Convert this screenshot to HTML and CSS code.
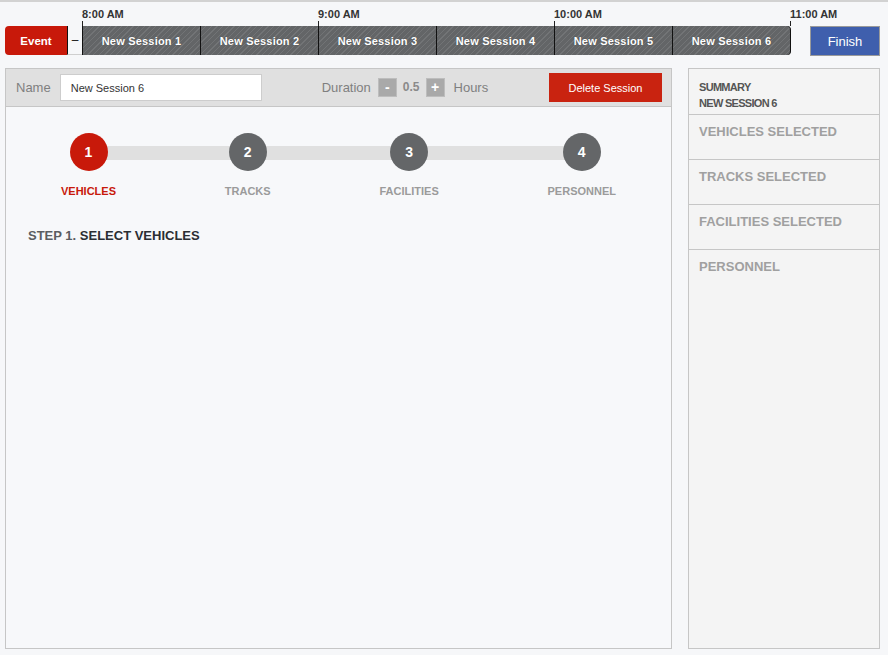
FILE: index.html
```html
<!DOCTYPE html>
<html>
<head>
<meta charset="utf-8">
<link rel="stylesheet" href="styles.css">
</head>
<body>
<div class="topbar">
  <div class="timeline">
    <div class="ruler">
      <div class="hour"><span class="hour-label">8:00 AM</span><span class="tick"></span></div>
      <div class="hour"><span class="hour-label">9:00 AM</span><span class="tick"></span></div>
      <div class="hour"><span class="hour-label">10:00 AM</span><span class="tick"></span></div>
      <div class="hour hour-last"><span class="hour-label">11:00 AM</span><span class="tick"></span></div>
    </div>
    <div class="track">
      <div class="event">Event</div>
      <div class="gap">–</div>
      <div class="session">New Session 1</div>
      <div class="session">New Session 2</div>
      <div class="session">New Session 3</div>
      <div class="session">New Session 4</div>
      <div class="session">New Session 5</div>
      <div class="session session-last">New Session 6</div>
    </div>
  </div>
  <button class="finish">Finish</button>
</div>

<div class="content">
  <div class="main">
    <div class="main-head">
      <span class="field-label">Name</span>
      <input class="name-input" type="text" value="New Session 6">
      <span class="field-label duration-label">Duration</span>
      <span class="stepbtn">-</span>
      <span class="duration-value">0.5</span>
      <span class="stepbtn">+</span>
      <span class="field-label hours-label">Hours</span>
      <button class="delete">Delete Session</button>
    </div>
    <div class="main-body">
      <div class="stepper">
        <div class="stepper-bar"></div>
        <div class="step step-active"><div class="circle">1</div><div class="step-label">VEHICLES</div></div>
        <div class="step"><div class="circle">2</div><div class="step-label">TRACKS</div></div>
        <div class="step"><div class="circle">3</div><div class="step-label">FACILITIES</div></div>
        <div class="step"><div class="circle">4</div><div class="step-label">PERSONNEL</div></div>
      </div>
      <h2 class="step-title"><span class="step-num">STEP 1.</span> SELECT VEHICLES</h2>
    </div>
  </div>
  <div class="sidebar">
    <div class="summary-head">
      <div>SUMMARY</div>
      <div>NEW SESSION 6</div>
    </div>
    <div class="summary-sec">VEHICLES SELECTED</div>
    <div class="summary-sec">TRACKS SELECTED</div>
    <div class="summary-sec">FACILITIES SELECTED</div>
    <div class="summary-sec summary-last">PERSONNEL</div>
  </div>
</div>
</body>
</html>
```

FILE: styles.css
```css
html, body {
  margin: 0;
  padding: 0;
}
body {
  background: #f6f7f9;
  border-top: 2px solid #d2d2d2;
  font-family: "Liberation Sans", Arial, sans-serif;
  color: #333;
  height: 653px;
  overflow: hidden;
}

/* ---------- top bar ---------- */
.topbar {
  display: flex;
  align-items: flex-start;
  padding: 0 8px 0 5px;
}
.timeline {
  display: flex;
  flex-direction: column;
}
.ruler {
  display: flex;
  padding-left: 77px;
  padding-top: 6px;
}
.hour {
  width: 236px;
  display: flex;
  flex-direction: column;
  align-items: flex-start;
}
.hour-last {
  width: 1px;
}
.hour-label {
  font-size: 11px;
  font-weight: bold;
  line-height: 13px;
  color: #333;
  white-space: nowrap;
}
.tick {
  width: 1px;
  height: 5px;
  background: #222;
}
.track {
  display: flex;
  height: 29px;
}
.event {
  width: 62px;
  background: #c8190a;
  border-radius: 4px 0 0 4px;
  color: #fff;
  font-weight: bold;
  font-size: 11.5px;
  display: flex;
  align-items: center;
  justify-content: center;
}
.gap {
  width: 15px;
  box-sizing: border-box;
  border-left: 1px solid #111;
  border-bottom: 1px solid #cfcfcf;
  font-size: 12px;
  color: #111;
  display: flex;
  align-items: center;
  justify-content: center;
}
.session {
  width: 118px;
  box-sizing: border-box;
  border-left: 1px solid #111;
  background-color: #636567;
  background-image: repeating-linear-gradient(-45deg, #636567 0, #636567 3px, #727476 3px, #727476 4px);
  color: #fff;
  font-weight: bold;
  font-size: 11px;
  letter-spacing: 0.2px;
  display: flex;
  align-items: center;
  justify-content: center;
  text-shadow: 0 0 1px rgba(0,0,0,0.4);
}
.session-last {
  width: 119px;
  border-right: 1px solid #111;
  border-radius: 0 4px 4px 0;
}
.finish {
  margin-left: auto;
  margin-top: 24px;
  width: 70px;
  height: 30px;
  box-sizing: border-box;
  background: #3f5fad;
  border: 1px solid #9a9a9a;
  color: #fff;
  font-family: "Liberation Sans", Arial, sans-serif;
  font-size: 13px;
  padding: 0;
}

/* ---------- content ---------- */
.content {
  display: flex;
  align-items: flex-start;
  padding: 0 8px 0 5px;
  margin-top: 12px;
}
.main {
  width: 667px;
  height: 581px;
  box-sizing: border-box;
  border: 1px solid #c6c6c6;
  background: #f7f8fa;
  margin-right: 16px;
}
.main-head {
  height: 38px;
  box-sizing: border-box;
  border-bottom: 1px solid #c6c6c6;
  background: #e0e0e0;
  display: flex;
  align-items: center;
  padding: 0 9px 0 10px;
}
.field-label {
  font-size: 13px;
  color: #7f7f7f;
}
.name-input {
  margin-left: 9px;
  width: 202px;
  height: 27px;
  box-sizing: border-box;
  border: 1px solid #cdcdcd;
  background: #fff;
  padding: 0 0 0 10px;
  font-family: "Liberation Sans", Arial, sans-serif;
  font-size: 11px;
  color: #333;
  outline: none;
}
.duration-label {
  margin-left: 60px;
}
.stepbtn {
  width: 19px;
  height: 19px;
  box-sizing: border-box;
  background: #a9a9a9;
  border: 1px solid #bdbdbd;
  color: #fff;
  font-weight: bold;
  font-size: 14px;
  line-height: 16px;
  text-align: center;
  margin-left: 7px;
}
.duration-value {
  font-size: 12px;
  font-weight: bold;
  color: #8a8a8a;
  margin-left: 6px;
  margin-right: -1px;
  position: relative;
  top: -1px;
}
.hours-label {
  margin-left: 9px;
}
.delete {
  margin-left: auto;
  width: 113px;
  height: 29px;
  border: none;
  background: #c92310;
  color: #fff;
  font-family: "Liberation Sans", Arial, sans-serif;
  font-size: 11px;
  padding: 0;
}

.main-body {
  padding-top: 26px;
}
.stepper {
  position: relative;
  display: flex;
  justify-content: space-between;
  padding: 0 55px;
}
.stepper-bar {
  position: absolute;
  left: 81px;
  right: 89px;
  top: 13px;
  height: 14px;
  background: #e0e0e0;
}
.step {
  position: relative;
  display: flex;
  flex-direction: column;
  align-items: center;
}
.circle {
  width: 38px;
  height: 38px;
  border-radius: 50%;
  background: #646668;
  color: #fff;
  font-weight: bold;
  font-size: 14px;
  display: flex;
  align-items: center;
  justify-content: center;
}
.step-label {
  margin-top: 14px;
  font-size: 11px;
  line-height: 13px;
  font-weight: bold;
  color: #9b9b9b;
}
.step-active .circle {
  background: #c8190a;
}
.step-active .step-label {
  color: #c8190a;
}
.step-title {
  margin: 30px 0 0 22px;
  font-size: 13px;
  line-height: 16px;
  font-weight: bold;
  color: #2b2e33;
}
.step-num {
  color: #5a5d61;
}

/* ---------- sidebar ---------- */
.sidebar {
  width: 192px;
  height: 581px;
  box-sizing: border-box;
  border: 1px solid #c6c6c6;
  background: #f4f4f4;
}
.summary-head {
  height: 46px;
  box-sizing: border-box;
  border-bottom: 1px solid #c6c6c6;
  padding: 10px 10px 0;
  font-size: 11px;
  line-height: 16px;
  font-weight: bold;
  letter-spacing: -0.7px;
  color: #555;
}
.summary-sec {
  height: 45px;
  box-sizing: border-box;
  border-bottom: 1px solid #c6c6c6;
  padding: 9px 10px 0;
  font-size: 13px;
  line-height: 16px;
  font-weight: bold;
  color: #a0a0a0;
}
.summary-last {
  border-bottom: none;
}
```
